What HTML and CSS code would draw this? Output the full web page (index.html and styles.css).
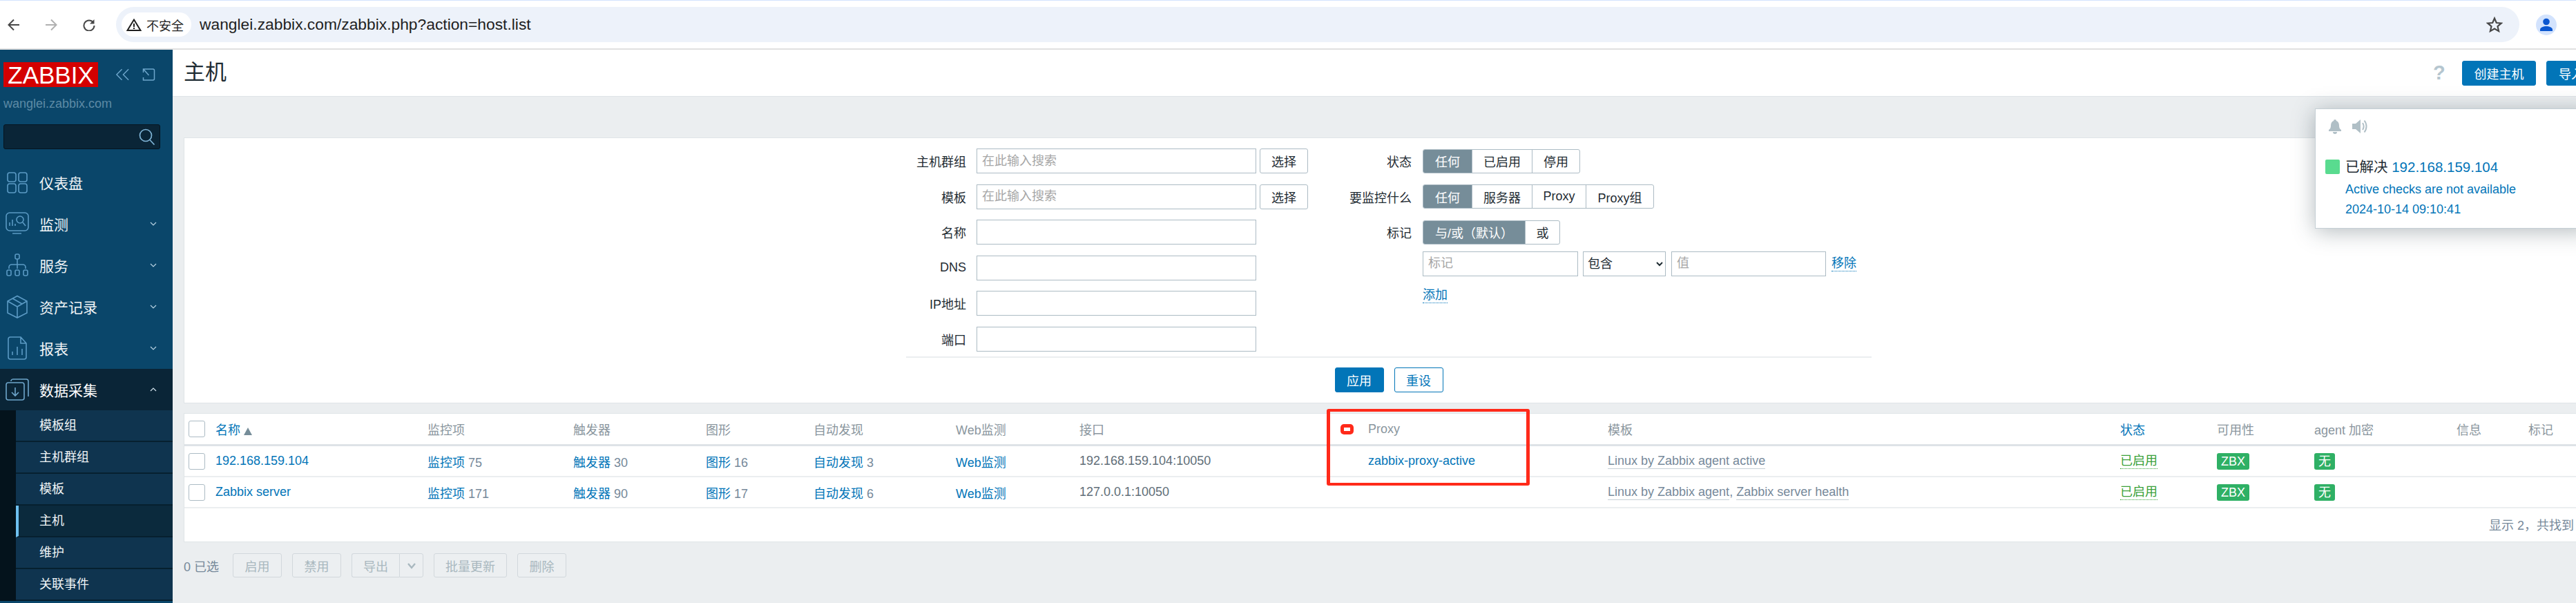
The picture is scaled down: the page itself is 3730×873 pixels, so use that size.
FILE: index.html
```html
<!DOCTYPE html>
<html lang="zh">
<head>
<meta charset="utf-8">
<title>主机</title>
<link rel="stylesheet" href="styles.css">
</head>
<body>
<div class="browser">
  <svg class="tb-icon" viewBox="0 0 18 18"><path d="M17 9H2M9 1.500 1.500 9 9 16.500" fill="none" stroke="#474747" stroke-width="2"/></svg>
  <svg class="tb-icon fwd" viewBox="0 0 18 18"><path d="M1 9h15M9 1.500 16.500 9 9 16.500" fill="none" stroke="#b0b0b0" stroke-width="2"/></svg>
  <svg class="tb-icon reload" viewBox="0 0 18 18"><path d="M15 5.500A7.500 7.500 0 1 0 16.500 10" fill="none" stroke="#474747" stroke-width="2"/><path d="M16.500 1v6.500H10z" fill="#474747"/></svg>
  <div class="omnibox">
    <div class="chip">
      <svg class="warn" viewBox="0 0 22 18"><path d="M11 1.500 20.500 17h-19z" fill="none" stroke="#1f1f1f" stroke-width="2"/><path d="M10 7h2v5h-2zM10 13h2v2h-2z" fill="#1f1f1f"/></svg>
      <span>不安全</span>
    </div>
    <span class="url">wanglei.zabbix.com/zabbix.php?action=host.list</span>
    <svg class="star" viewBox="0 0 24 24"><path d="M12 2.500 14.800 9l7 .6-5.300 4.600 1.600 6.900L12 17.500l-6.100 3.600 1.600-6.900L2.200 9.600l7-.6z" fill="none" stroke="#474747" stroke-width="2.200"/></svg>
  </div>
  <div class="avatar"><svg viewBox="0 0 30 30"><circle cx="15" cy="10.500" r="4.800" fill="#0b57d0"/><path d="M6 24v-2c0-3.500 5-5 9-5s9 1.500 9 5v2z" fill="#0b57d0"/></svg></div>
</div>

<div class="app">
  <aside class="sidebar">
    <div class="brand">
      <div class="logo">ZABBIX</div>
      <svg class="side-ctl" viewBox="0 0 22 18"><path d="M10 1 2 9l8 8M20 1l-8 8 8 8" fill="none" stroke="#6ea6cc" stroke-width="1.500"/></svg>
      <svg class="side-ctl" viewBox="0 0 20 18"><path d="M3 5V1h14a2 2 0 0 1 2 2v12a2 2 0 0 1-2 2H3v-4M3 1l8 9M3 6V1h5" fill="none" stroke="#6ea6cc" stroke-width="1.500"/></svg>
    </div>
    <div class="hostname">wanglei.zabbix.com</div>
    <div class="search">
      <svg viewBox="0 0 24 24"><circle cx="10" cy="10" r="8.500" fill="none" stroke="#7fb4d6" stroke-width="1.700"/><path d="m15.500 16 7 7.500" stroke="#7fb4d6" stroke-width="1.700"/></svg>
    </div>
    <nav class="menu">
      <a class="item"><svg class="mi" viewBox="0 0 34 34"><g fill="none" stroke="#5b9ac4" stroke-width="1.600"><rect x="3" y="3" width="12" height="13" rx="3"/><rect x="19" y="3" width="12" height="13" rx="3"/><rect x="3" y="19" width="12" height="13" rx="3"/><rect x="19" y="19" width="12" height="13" rx="3"/></g></svg><span>仪表盘</span></a>
      <a class="item"><svg class="mi" viewBox="0 0 34 34"><g fill="none" stroke="#5b9ac4" stroke-width="1.600"><rect x="1" y="1" width="32" height="26" rx="5"/><path d="M10 31h13M6 20v-5M10 20v-9M14 20v-3"/><circle cx="21" cy="11" r="5"/><path d="m25 15 4 5"/></g></svg><span>监测</span><svg class="chev" viewBox="0 0 10 6"><path d="m1 1 4 4 4-4" fill="none" stroke="#b9d3e3" stroke-width="1.200"/></svg></a>
      <a class="item"><svg class="mi" viewBox="0 0 34 34"><g fill="none" stroke="#5b9ac4" stroke-width="1.600"><rect x="14" y="1" width="6" height="7" rx="2"/><path d="M17 8v14M5 22v-2a4 4 0 0 1 4-4h16a4 4 0 0 1 4 4v2"/><rect x="2" y="24" width="6" height="8" rx="2"/><rect x="14" y="24" width="6" height="8" rx="2"/><rect x="26" y="24" width="6" height="8" rx="2"/></g></svg><span>服务</span><svg class="chev" viewBox="0 0 10 6"><path d="m1 1 4 4 4-4" fill="none" stroke="#b9d3e3" stroke-width="1.200"/></svg></a>
      <a class="item"><svg class="mi" viewBox="0 0 34 34"><g fill="none" stroke="#5b9ac4" stroke-width="1.600"><path d="M17 1.500 31 9v17l-14 7-14-7V9zM3 9l14 8 14-8M17 17v16M10 5l14 8"/></g></svg><span>资产记录</span><svg class="chev" viewBox="0 0 10 6"><path d="m1 1 4 4 4-4" fill="none" stroke="#b9d3e3" stroke-width="1.200"/></svg></a>
      <a class="item"><svg class="mi" viewBox="0 0 34 34"><g fill="none" stroke="#5b9ac4" stroke-width="1.600"><path d="M7 1h15l8 9v20a3 3 0 0 1-3 3H7a3 3 0 0 1-3-3V4a3 3 0 0 1 3-3zM22 1v9h8M10 27v-5M17 27V15M24 27v-9"/></g></svg><span>报表</span><svg class="chev" viewBox="0 0 10 6"><path d="m1 1 4 4 4-4" fill="none" stroke="#b9d3e3" stroke-width="1.200"/></svg></a>
      <a class="item open"><svg class="mi" viewBox="0 0 34 34"><g fill="none" stroke="#6ea6cc" stroke-width="1.600"><rect x="1" y="7" width="26" height="25" rx="3"/><path d="M8 5V4a3 3 0 0 1 3-2h19a3 3 0 0 1 3 3v22M14 14v12M9 21l5 5 5-5"/></g></svg><span>数据采集</span><svg class="chev" viewBox="0 0 10 6"><path d="m1 5 4-4 4 4" fill="none" stroke="#d5e4ee" stroke-width="1.200"/></svg></a>
      <div class="submenu">
        <a class="sub">模板组</a>
        <a class="sub">主机群组</a>
        <a class="sub">模板</a>
        <a class="sub current">主机</a>
        <a class="sub">维护</a>
        <a class="sub">关联事件</a>
      </div>
    </nav>
  </aside>

  <main class="main">
    <header class="page-head">
      <h1>主机</h1>
      <span class="help">?</span>
      <button class="btn primary create">创建主机</button>
      <button class="btn primary import">导入</button>
    </header>

    <div class="content">
      <section class="filter">
        <div class="filter-cols">
          <div class="fcol left">
            <label class="flabel">主机群组</label>
            <div class="fctl"><input class="inp wide" placeholder="在此输入搜索"><button class="btn plain">选择</button></div>
            <label class="flabel">模板</label>
            <div class="fctl"><input class="inp wide" placeholder="在此输入搜索"><button class="btn plain">选择</button></div>
            <label class="flabel">名称</label>
            <div class="fctl"><input class="inp wide"></div>
            <label class="flabel">DNS</label>
            <div class="fctl"><input class="inp wide"></div>
            <label class="flabel">IP地址</label>
            <div class="fctl"><input class="inp wide"></div>
            <label class="flabel">端口</label>
            <div class="fctl"><input class="inp wide"></div>
          </div>
          <div class="fcol right">
            <label class="flabel">状态</label>
            <div class="seg"><span class="on s71">任何</span><span class="s87">已启用</span><span class="s69">停用</span></div>
            <label class="flabel">要监控什么</label>
            <div class="seg"><span class="on s71">任何</span><span class="s87">服务器</span><span class="s78">Proxy</span><span class="s98">Proxy组</span></div>
            <label class="flabel">标记</label>
            <div class="seg"><span class="on s148">与/或（默认）</span><span class="s50">或</span></div>
            <div class="tagrow">
              <input class="inp tag" placeholder="标记">
              <select class="sel"><option>包含</option></select>
              <input class="inp tag val" placeholder="值">
              <a class="dotted">移除</a>
            </div>
            <div class="addrow"><a class="dotted">添加</a></div>
          </div>
        </div>
        <div class="filter-actions">
          <button class="btn primary act">应用</button>
          <button class="btn outline act">重设</button>
        </div>
      </section>

      <section class="table">
        <div class="row head">
          <span class="cb"></span>
          <a class="link">名称<i class="tri"></i></a>
          <span>监控项</span><span>触发器</span><span>图形</span><span>自动发现</span><span>Web监测</span><span>接口</span><span>Proxy</span><span>模板</span>
          <a class="link">状态</a>
          <span>可用性</span><span>agent 加密</span><span>信息</span><span>标记</span>
        </div>
        <div class="row body">
          <span class="cb"></span>
          <a class="link">192.168.159.104</a>
          <span><a class="link">监控项</a> 75</span><span><a class="link">触发器</a> 30</span><span><a class="link">图形</a> 16</span><span><a class="link">自动发现</a> 3</span><a class="link">Web监测</a>
          <span class="dark">192.168.159.104:10050</span>
          <a class="link">zabbix-proxy-active</a>
          <span><a class="tpl">Linux by Zabbix agent active</a></span>
          <a class="enabled">已启用</a>
          <span><b class="badge">ZBX</b></span><span><b class="badge">无</b></span><span></span><span></span>
        </div>
        <div class="row body">
          <span class="cb"></span>
          <a class="link">Zabbix server</a>
          <span><a class="link">监控项</a> 171</span><span><a class="link">触发器</a> 90</span><span><a class="link">图形</a> 17</span><span><a class="link">自动发现</a> 6</span><a class="link">Web监测</a>
          <span class="dark">127.0.0.1:10050</span>
          <span></span>
          <span><a class="tpl">Linux by Zabbix agent</a>, <a class="tpl">Zabbix server health</a></span>
          <a class="enabled">已启用</a>
          <span><b class="badge">ZBX</b></span><span><b class="badge">无</b></span><span></span><span></span>
        </div>
        <div class="table-foot">显示 2，共找到 2</div>
      </section>

      <div class="bulk">
        <span class="count">0 已选</span>
        <button class="btn off w71">启用</button>
        <button class="btn off w71">禁用</button>
        <div class="split">
          <button class="btn off w69">导出</button>
          <button class="btn off w35"><svg viewBox="0 0 14 10"><path d="m2 2 5 6 5-6" fill="none" stroke="#a9b8bf" stroke-width="2.400"/></svg></button>
        </div>
        <button class="btn off w106">批量更新</button>
        <button class="btn off w71">删除</button>
      </div>
    </div>
  </main>
</div>

<div class="notice">
  <div class="notice-icons">
    <svg class="bell" viewBox="0 0 20 22"><path d="M10 1a2 2 0 0 1 2 2c3 1 4 4 4 7 0 3 1 5 3 6v2H1v-2c2-1 3-3 3-6 0-3 1-6 4-7a2 2 0 0 1 2-2zM7 19h6a3 3 0 0 1-6 0z" fill="#b0bfc6"/></svg>
    <svg class="speaker" viewBox="0 0 23 22"><path d="M1 7h5l7-6v20l-7-6H1z" fill="#b0bfc6"/><path d="M16 6c2 3 2 7 0 10M18.500 2.500c4 5 4 12 0 17" fill="none" stroke="#b0bfc6" stroke-width="2"/></svg>
  </div>
  <div class="notice-msg">
    <i class="square"></i>
    <div class="notice-text">
      <div class="notice-title">已解决 <a class="link">192.168.159.104</a></div>
      <div class="notice-line">Active checks are not available</div>
      <div class="notice-line">2024-10-14 09:10:41</div>
    </div>
  </div>
</div>

<div class="mark"><i class="mark-pin"></i></div>
</body>
</html>
```
FILE: styles.css
```css
* { box-sizing: border-box; }
html, body { margin: 0; padding: 0; width: 3730px; height: 873px; overflow: hidden; }
body {
  position: relative;
  font-family: "Liberation Sans", "Noto Sans CJK SC", sans-serif;
  font-size: 18px;
  color: #1f2c33;
  background: #ebeef0;
  display: flex;
  flex-direction: column;
}
a { color: inherit; text-decoration: none; }
i, b { font-style: normal; }

/* browser toolbar */
.browser {
  height: 72px;
  flex: none;
  background: #fff;
  border-top: 1px solid #d3e3fd;
  border-bottom: 2px solid #e0e0e0;
  display: flex;
  align-items: center;
  padding-left: 11px;
}
.tb-icon { width: 18px; height: 18px; flex: none; margin-right: 36px; }
.tb-icon.fwd { margin-right: 37px; }
.tb-icon.reload { margin-right: 30px; }
.omnibox {
  width: 3480px;
  height: 51px;
  background: #edf2fa;
  border-radius: 26px;
  display: flex;
  align-items: center;
  padding-left: 8px;
  flex: none;
}
.chip {
  width: 101px;
  height: 35px;
  background: #fff;
  border-radius: 18px;
  display: flex;
  align-items: center;
  padding-left: 7px;
  font-size: 18px;
  color: #1f1f1f;
  flex: none;
}
.warn { width: 22px; height: 18px; margin-right: 7px; }
.url { margin-left: 12px; font-size: 22.800px; color: #1f1f1f; white-space: nowrap; }
.star { width: 24px; height: 24px; margin-left: auto; margin-right: 24px; }
.avatar { width: 30px; height: 30px; border-radius: 50%; background: #d3e3fd; margin-left: 24px; flex: none; }
.avatar svg { width: 30px; height: 30px; display: block; }

/* layout */
.app { flex: 1; display: flex; min-height: 0; }
.sidebar { width: 250px; flex: none; background: #0a466a; display: flex; flex-direction: column; padding-top: 18px; overflow: hidden; }
.main { flex: 1; min-width: 0; display: flex; flex-direction: column; }

/* sidebar */
.brand { display: flex; align-items: center; height: 36px; padding-left: 5px; }
.logo { width: 137px; height: 36px; background: #d40000; color: #fff; font-size: 35px; line-height: 37px; text-align: center; }
.side-ctl { height: 18px; width: 21px; margin-left: 25px; }
.side-ctl + .side-ctl { margin-left: 16px; }
.hostname { height: 54px; padding: 14px 0 0 5px; font-size: 18px; line-height: 20px; color: #5d8aa5; }
.search { width: 227px; height: 36px; margin-left: 5px; background: #0a2537; border: 1px solid #05141f; border-radius: 3px; display: flex; align-items: center; justify-content: flex-end; padding-right: 6px; }
.search svg { width: 24px; height: 24px; }
.menu { margin-top: 18px; display: flex; flex-direction: column; }
.item { height: 60px; display: flex; align-items: center; padding: 0 23px 0 8px; color: #f0f4f6; font-size: 21px; flex: none; }
.item.open { background: #0a2537; color: #fff; }
.mi { width: 34px; height: 34px; margin-right: 15px; flex: none; }
.chev { width: 10px; height: 6px; margin-left: auto; }
.submenu { background: #04131c; padding-left: 23px; }
.sub { display: block; height: 46px; line-height: 44px; padding-left: 34px; background: #0f344f; border-bottom: 2px solid #06202f; color: #f0f4f6; font-size: 18px; }
.sub.current { background: #0b2a3d; border-left: 4px solid #6fc0f0; padding-left: 30px; }

/* header */
.page-head { height: 68px; flex: none; background: #fff; border-bottom: 1px solid #dfe4e7; display: flex; align-items: center; padding-left: 16px; white-space: nowrap; overflow: hidden; }
.page-head h1 { margin: 0 0 2px; font-size: 31px; font-weight: 400; line-height: 36px; }
.help { margin-left: auto; font-size: 29px; font-weight: 700; color: #b5c6cf; width: 42px; }
.btn { font-family: inherit; font-size: 18px; border-radius: 3px; height: 36px; padding: 0; cursor: default; flex: none; }
.btn.primary { background: #0275b8; border: 1px solid #0275b8; color: #fff; }
.create { width: 107px; margin-right: 15px; }
.import { width: 72px; margin-right: -29px; }
.btn.plain { width: 70px; margin-left: 5px; background: #fff; border: 1px solid #acbbc4; color: #1f2c33; }
.btn.outline { background: #fff; border: 1px solid #0275b8; color: #0275b8; }
.act { width: 71px; }

.content { flex: 1; min-height: 0; padding: 59px 0 0 16px; display: flex; flex-direction: column; }

/* filter */
.filter { height: 385px; flex: none; background: #fff; border-top: 1px solid #dfe4e7; border-bottom: 1px solid #dfe4e7; border-left: 1px solid #dfe4e7; padding-top: 15px; display: flex; flex-direction: column; }
.filter-cols { display: flex; height: 301px; flex: none; }
.fcol { display: grid; align-content: start; row-gap: 15.600px; grid-auto-rows: 36px; column-gap: 15px; align-items: center; }
.fcol.left { width: 1627px; grid-template-columns: 1132px 480px; }
.fcol.right { column-gap: 16px; grid-template-columns: 150px 640px; width: 806px; }
.flabel { text-align: right; }
.fctl { display: flex; align-items: center; }
.inp { height: 36px; border: 1px solid #acbbc4; background: #fff; padding: 0 7px; font-family: inherit; font-size: 18px; color: #1f2c33; border-radius: 0; outline: 0; }
.inp::placeholder { color: #a6a6a6; opacity: 1; }
.wide { width: 405px; flex: none; }
.seg { display: flex; height: 35px; justify-self: start; border: 1px solid #acbbc4; border-radius: 3px; overflow: hidden; }
.seg span { display: flex; align-items: center; justify-content: center; border-left: 1px solid #acbbc4; flex: none; }
.seg span.on { background: #768d99; color: #fff; border-left: 0; }
.s71 { width: 70px; } .s87 { width: 87px; } .s69 { width: 69px; } .s78 { width: 78px; } .s98 { width: 98px; } .s148 { width: 147px; } .s50 { width: 50px; }
.tagrow { grid-column: 2; align-self: start; display: flex; align-items: center; margin-top: -6px; height: 36px; white-space: nowrap; }
.tag { width: 225px; flex: none; }
.sel { width: 120px; height: 36px; margin: 0 8px 0 7px; border: 1px solid #acbbc4; background: #fff; font-family: inherit; font-size: 18px; color: #1f2c33; border-radius: 0; padding-left: 2px; flex: none; }
.val { width: 224px; }
.dotted { color: #0275b8; border-bottom: 1px dotted #0275b8; line-height: 22px; margin-left: 8px; }
.addrow { grid-column: 2; align-self: start; margin-top: -5px; }
.addrow .dotted { margin-left: 0; display: inline-block; }
.filter-actions { margin-left: 1045px; width: 1398px; height: 52px; flex: none; border-top: 2px solid #ebeef0; padding-top: 14px; display: flex; justify-content: center; gap: 15px; }

/* table */
.table { height: 187px; flex: none; margin-top: 14px; background: #fff; border-top: 1px solid #dfe4e7; border-bottom: 1px solid #dfe4e7; border-left: 1px solid #dfe4e7; overflow: hidden; }
.row { display: grid; grid-template-columns: 45px 307px 211px 192px 156px 206px 179px 418px 347px 742px 140px 141px 206px 104px 100px; align-items: center; height: 45px; border-bottom: 2px solid #ebeef0; white-space: nowrap; color: #76899a; }
.row.head { height: 47px; border-bottom: 3px solid #dee3e7; color: #8a969e; }
.dark { color: #5f6e78; }
.cb { width: 24px; height: 24px; margin-left: 6px; border: 1px solid #acbbc4; border-radius: 3px; background: #fff; }
.link { color: #0275b8; }
.tri { display: inline-block; margin-left: 5px; border-left: 6px solid transparent; border-right: 6px solid transparent; border-bottom: 11px solid #768d99; vertical-align: -1px; }
.tpl { color: #76899a; border-bottom: 1px solid #c6d0d6; padding-bottom: 1px; }
.enabled { color: #3aa13a; border-bottom: 1px dotted #3aa13a; justify-self: start; line-height: 22px; }
.badge { display: inline-block; height: 24px; line-height: 24px; padding: 0 6px; background: #2fb065; color: #fff; font-weight: 400; border-radius: 3px; vertical-align: middle; }
.table-foot { padding: 14px 0 0 3337px; color: #76899a; white-space: nowrap; line-height: 22px; }

/* bulk bar */
.bulk { margin-top: 16px; height: 35px; display: flex; align-items: center; gap: 15px; white-space: nowrap; }
.count { width: 56px; color: #76899a; }
.btn.off { height: 35px; background: #eceff1; border: 1px solid #d2d8dc; color: #a9b8bf; }
.w71 { width: 71px; } .w69 { width: 69px; } .w35 { width: 35px; } .w106 { width: 106px; }
.split { display: flex; }
.split .w69 { border-radius: 3px 0 0 3px; border-right: 0; }
.split .w35 { border-radius: 0 3px 3px 0; display: flex; align-items: center; justify-content: center; }
.split svg { width: 14px; height: 10px; }

/* overlays */
.notice { position: absolute; left: 3352px; top: 157px; width: 400px; height: 174px; background: #fff; border: 1px solid #c5cfd5; box-shadow: 0 4px 30px rgba(40, 60, 70, .35); padding: 14px 0 0 14px; }
.notice-icons { display: flex; align-items: center; gap: 14px; height: 22px; padding-left: 4px; }
.bell { width: 20px; height: 22px; }
.speaker { width: 23px; height: 22px; }
.notice-msg { display: flex; margin-top: 37px; }
.square { width: 21px; height: 21px; background: #59db8f; border-radius: 2px; flex: none; margin-right: 8px; }
.notice-text { white-space: nowrap; color: #0275b8; }
.notice-title { font-size: 20.500px; line-height: 22px; color: #1f2c33; margin-bottom: 7px; }
.notice-line { font-size: 18px; line-height: 29px; }
.mark { position: absolute; left: 1921px; top: 592px; width: 294px; height: 111px; border: solid #ff2a1a; border-width: 4px 5px; border-radius: 3px; }
.mark-pin { position: absolute; left: 15px; top: 18px; width: 19px; height: 15px; background: #ff2a1a; border-radius: 5px; }
.mark-pin::after { content: ""; position: absolute; left: 5px; top: 5px; width: 9px; height: 5px; background: #fff; }
```
